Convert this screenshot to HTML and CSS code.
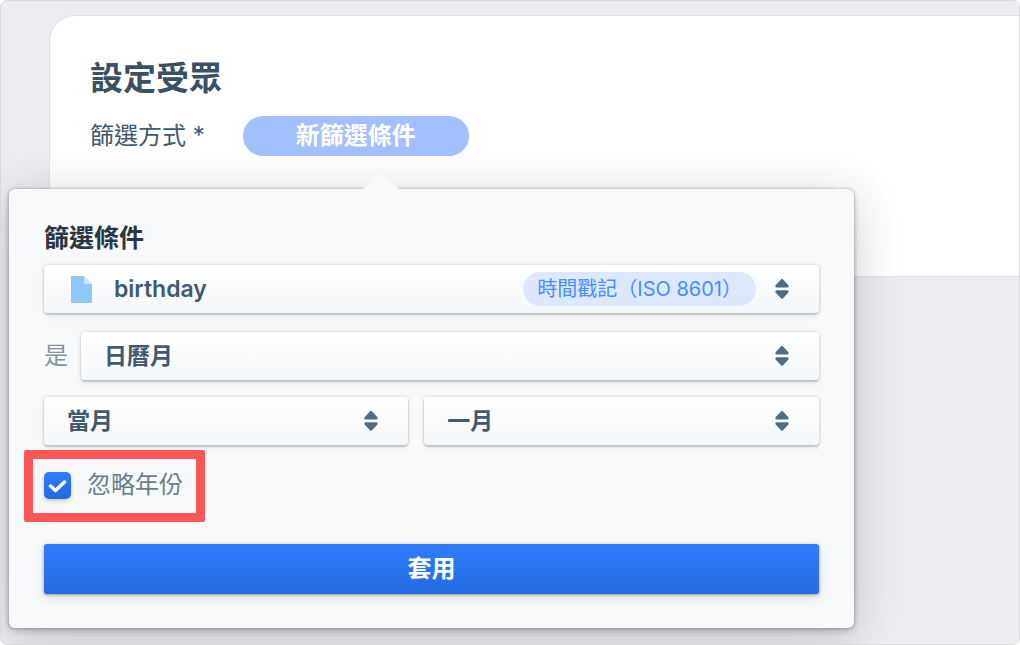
FILE: index.html
```html
<!DOCTYPE html>
<html lang="zh-Hant">
<head>
    <meta charset="UTF-8">
    <meta name="viewport" content="width=device-width, initial-scale=1.0">
    <title>設定受眾</title>
    <link rel="stylesheet" href="styles.css">
</head>
<body>
    <svg width="0" height="0" class="sprite" aria-hidden="true">
        <symbol id="caret" viewBox="0 0 14 22">
            <path d="M6.2 1.2Q7 .4 7.8 1.2L13.4 7.2Q14.2 9 12.6 9.4H1.4Q-.2 9 .6 7.2ZM6.2 20.4Q7 21.2 7.8 20.4L13.4 14.4Q14.2 12.6 12.6 12.2H1.4Q-.2 12.6 .6 14.4Z"/>
        </symbol>
    </svg>
    <main class="page">
        <section class="card">
            <h1 class="title">設定受眾</h1>
            <div class="field">
                <span class="field-label">篩選方式 *</span>
                <button type="button" class="new-filter">新篩選條件</button>
            </div>
        </section>

        <form class="popover">
            <label class="popover-title" for="attribute">篩選條件</label>
            <div class="select">
                <svg class="file-icon" viewBox="0 0 21 27" aria-hidden="true">
                    <path fill="#8fc8f8" d="M0 0H13L21 8V27H0Z"/>
                    <path fill="#d3eafd" d="M13 0L21 8H14.500Q13 8 13 6.500Z"/>
                </svg>
                <select id="attribute">
                    <option>birthday</option>
                </select>
                <span class="tag">時間戳記（ISO 8601）</span>
                <svg class="caret" aria-hidden="true"><use href="#caret"/></svg>
            </div>
            <div class="row">
                <label class="row-label" for="operator">是</label>
                <div class="select">
                    <select id="operator">
                        <option>日曆月</option>
                    </select>
                    <svg class="caret" aria-hidden="true"><use href="#caret"/></svg>
                </div>
            </div>
            <div class="columns">
                <div class="select">
                    <select aria-label="當月">
                        <option>當月</option>
                    </select>
                    <svg class="caret" aria-hidden="true"><use href="#caret"/></svg>
                </div>
                <div class="select">
                    <select aria-label="一月">
                        <option>一月</option>
                    </select>
                    <svg class="caret" aria-hidden="true"><use href="#caret"/></svg>
                </div>
            </div>
            <label class="check">
                <input type="checkbox" checked>
                忽略年份
            </label>
            <button type="button" class="apply">套用</button>
        </form>
    </main>
</body>
</html>
```
FILE: styles.css
```css
* {
    box-sizing: border-box;
}
body {
    margin: 0;
    background-color: #fff;
    color: #425a70;
    font-family: Inter, "Noto Sans CJK TC", sans-serif;
    font-size: 24px;
    line-height: 32px;
}
button, select {
    font: inherit;
    color: inherit;
    border: 0;
    cursor: pointer;
}
.sprite {
    position: absolute;
}
.page {
    position: relative;
    min-height: 100vh;
    padding: 14px 0 0 48px;
    border: 1px solid #d9dadb;
    border-radius: 7px;
    background-color: #ebedf1;
    overflow: hidden;
}
.card {
    padding: 40px 40px 120px;
    border: 1px solid #dde3e9;
    border-right: 0;
    border-radius: 26px 0 0 0;
    background-color: #fff;
}
.title {
    margin: 0 0 16px;
    color: #3a5064;
    font-size: 33px;
    line-height: 44px;
}
.field {
    display: flex;
    align-items: center;
    gap: 38px;
}
.new-filter {
    width: 226px;
    height: 40px;
    padding: 0;
    border-radius: 20px;
    background-color: #a3c0fe;
    color: #fff;
    font-weight: 700;
}

/* 彈出視窗 */
.popover {
    position: absolute;
    top: 188px;
    left: 8px;
    width: min(845px, 100% - 16px);
    padding: 33px 35px 34px;
    border-radius: 6px;
    background-color: #f8f9fb;
    box-shadow: 0 0 3px rgba(0, 0, 0, 0.3), 0 3px 6px rgba(0, 0, 0, 0.18), 0 8px 48px rgba(0, 0, 0, 0.2);
}
.popover::before {
    content: "";
    position: absolute;
    top: -17px;
    left: 353px;
    width: 38px;
    height: 18px;
    background-color: #f8f9fb;
    clip-path: polygon(0 100%, 45% 8%, 50% 0, 55% 8%, 100% 100%);
}
.popover-title {
    display: block;
    margin-bottom: 11px;
    color: #2b3640;
    font-size: 25px;
    font-weight: 700;
}
.select {
    display: flex;
    flex: 1;
    align-items: center;
    height: 48px;
    padding: 0 30px 0 23px;
    border-radius: 4px;
    background-image: linear-gradient(#fff, #f4f7f9);
    box-shadow: 0 0 3px rgba(0, 0, 0, 0.18), 0 2px 2px rgba(0, 0, 0, 0.16), 0 3px 8px rgba(0, 0, 0, 0.05);
}
.select select {
    flex: 1;
    min-width: 0;
    height: 48px;
    padding: 0;
    appearance: none;
    background: none;
    font-size: 23px;
    font-weight: 600;
}
.caret {
    flex: none;
    width: 14px;
    height: 22px;
    fill: #4e6d84;
}
.file-icon {
    width: 21px;
    height: 27px;
    margin: 0 22px 0 4px;
}
.tag {
    margin-right: 19px;
    padding: 0 14px;
    border-radius: 17px;
    background-color: #dbe8fd;
    color: #4b8dff;
    font-size: 20px;
    line-height: 34px;
    white-space: nowrap;
}
.row {
    display: flex;
    align-items: center;
    gap: 13px;
    margin: 19px 0 17px;
}
.row-label {
    color: #8293a3;
}
.columns {
    display: grid;
    grid-template-columns: 12fr 13fr;
    gap: 16px;
}
.check {
    position: relative;
    display: flex;
    align-items: center;
    gap: 16px;
    width: fit-content;
    margin: 24px 0 43px;
    color: #6a7d8d;
    cursor: pointer;
}
.check input {
    width: 27px;
    height: 27px;
    margin: 0;
    appearance: none;
    border-radius: 5px;
    background: linear-gradient(#2e7dff, #2568dc);
    box-shadow: 0 2px 4px rgba(0, 0, 0, 0.2);
}
.check input:checked {
    background: url("data:image/svg+xml,%3Csvg xmlns='http://www.w3.org/2000/svg' viewBox='0 0 27 27'%3E%3Cpath d='M6.500 14l5 4.500 9-8.500' fill='none' stroke='white' stroke-width='3.500' stroke-linecap='round' stroke-linejoin='round'/%3E%3C/svg%3E"), linear-gradient(#2e7dff, #2568dc);
}
/* 紅框標示 */
.check::after {
    content: "";
    position: absolute;
    inset: -19px -22px -21px -20px;
    border: 9px solid #ff5757;
    border-radius: 2px;
    pointer-events: none;
}
.apply {
    display: block;
    width: 100%;
    height: 50px;
    border-radius: 3px;
    background-image: linear-gradient(#2e7dff, #266adf);
    box-shadow: 0 1px 3px rgba(0, 0, 0, 0.35), 0 3px 12px rgba(0, 0, 0, 0.12);
    color: #fff;
    font-weight: 700;
}
```
